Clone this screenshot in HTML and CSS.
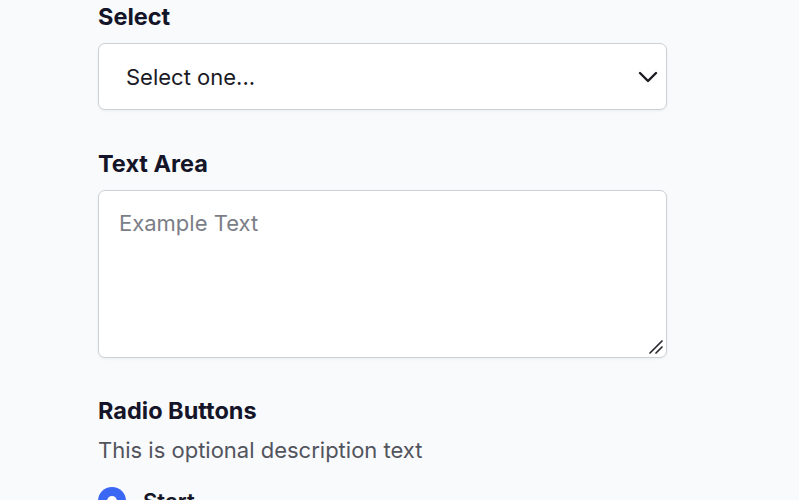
FILE: index.html
```html
<!DOCTYPE html>
<html>
<head>
<meta charset="utf-8">
<link rel="stylesheet" href="styles.css">
</head>
<body>
<div class="form">
  <div class="field">
    <label class="label">Select</label>
    <div class="select">
      <span>Select one...</span>
      <svg class="chev" width="20" height="12" viewBox="0 0 20 12"><path d="M2 2 L10 10 L18 2" fill="none" stroke="#1a1a24" stroke-width="2.4" stroke-linecap="round" stroke-linejoin="round"/></svg>
    </div>
  </div>
  <div class="field">
    <label class="label">Text Area</label>
    <div class="textarea">
      <span class="placeholder">Example Text</span>
      <svg class="grip" width="16" height="16" viewBox="0 0 16 16"><path d="M2 14 L14 2 M8 14 L14 8" stroke="#2a2a30" stroke-width="1.7" stroke-linecap="round"/></svg>
    </div>
  </div>
  <div class="field">
    <label class="label">Radio Buttons</label>
    <p class="desc">This is optional description text</p>
    <div class="radio-row">
      <span class="radio"><span class="dot"></span></span>
      <span class="radio-label">Start</span>
    </div>
  </div>
</div>
</body>
</html>
```
FILE: styles.css
```css
html, body { margin: 0; padding: 0; }
body {
  background: #f9fafb;
  font-family: Inter, "Noto Sans", sans-serif;
  color: #151626;
  height: 500px;
  overflow: hidden;
}
.form {
  width: 569px;
  margin-left: 98px;
  padding-top: 2px;
  display: flex;
  flex-direction: column;
}
.field { display: flex; flex-direction: column; }
.field + .field { margin-top: 39px; }
.field:last-child { margin-top: 38px; }
.label {
  font-size: 23.5px;
  font-weight: 650;
  line-height: 30px;
  margin-bottom: 11px;
  color: #141528;
}
.select {
  box-sizing: border-box;
  height: 67px;
  border: 1px solid #cdd0d6;
  border-radius: 7px;
  background: #fff;
  box-shadow: 0 1px 3px rgba(0,0,0,0.06);
  display: flex;
  align-items: center;
  justify-content: space-between;
  padding: 0 8px 0 27px;
  font-size: 22px;
  color: #1a1b26;
}
.chev { margin-top: 1px; }
.textarea {
  position: relative;
  box-sizing: border-box;
  height: 168px;
  border: 1px solid #cdd0d6;
  border-radius: 7px;
  background: #fff;
  box-shadow: 0 1px 3px rgba(0,0,0,0.06);
  padding: 17px 20px;
  font-size: 22px;
  line-height: 30px;
}
.placeholder { color: #7b7e87; }
.grip { position: absolute; right: 2px; bottom: 2px; }
.desc {
  margin: -2px 0 0;
  font-size: 22px;
  line-height: 30px;
  color: #52545d;
}
.radio-row {
  display: flex;
  align-items: center;
  gap: 17px;
  margin-top: 22px;
}
.radio {
  width: 28px; height: 28px;
  border-radius: 50%;
  background: #3a68f5;
  display: flex; align-items: center; justify-content: center;
}
.dot { width: 10px; height: 10px; border-radius: 50%; background: #fff; }
.radio-label { font-size: 22px; font-weight: 600; }
```
